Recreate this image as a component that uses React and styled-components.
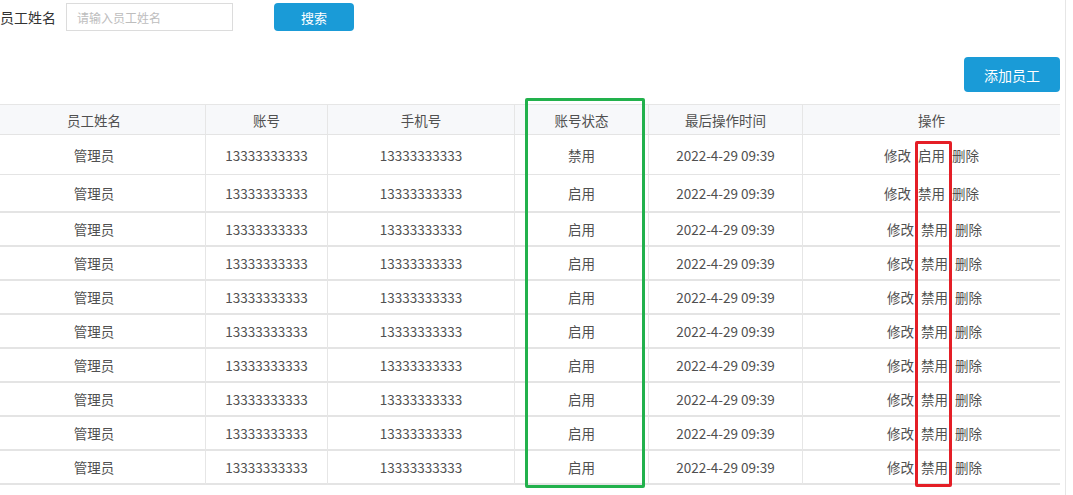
import React from 'react'
import styled, { createGlobalStyle } from 'styled-components'

const GlobalStyle = createGlobalStyle`
  html, body {
    margin: 0;
    padding: 0;
    background: #fff;
  }
  body {
    font-family: "Noto Sans CJK SC", "Microsoft YaHei", sans-serif;
    color: #4d4d4d;
  }
`

const Page = styled.div`
  width: 1066px;
  height: 495px;
  border-right: 1px solid #e6e6e6;
  box-sizing: border-box;
  overflow: hidden;
`

const SearchBar = styled.div`
  display: flex;
  align-items: center;
  height: 28px;
  padding-top: 3px;
`

const Label = styled.span`
  font-size: 14px;
  color: #333;
  margin-right: 10px;
  line-height: 28px;
`

const Input = styled.input`
  width: 167px;
  height: 28px;
  box-sizing: border-box;
  border: 1px solid #dcdcdc;
  padding: 0 10px;
  font-family: inherit;
  font-size: 12px;
  color: #333;
  outline: none;
  &::placeholder {
    color: #bdbdbd;
  }
`

const Button = styled.button`
  width: ${p => p.$w}px;
  height: ${p => p.$h}px;
  margin-left: ${p => p.$ml || 0}px;
  border: none;
  border-radius: 4px;
  background: #1a9bd7;
  color: #fff;
  font-family: inherit;
  font-size: ${p => p.$fs || 13}px;
  cursor: pointer;
  padding: 0;
`

const ActionBar = styled.div`
  display: flex;
  justify-content: flex-end;
  margin-top: 26px;
  padding-right: 5px;
`

const TableWrap = styled.div`
  position: relative;
  margin-top: 12px;
  margin-left: -17px;
  width: 1077px;
`

const Grid = styled.div`
  display: grid;
  grid-template-columns: 222px 122px 187px 134px 154px 258px;
  width: 1077px;
  border-top: 1px solid #e6e6e6;
  border-right: 1px solid #e6e6e6;
  box-sizing: border-box;
`

const Cell = styled.div`
  display: flex;
  align-items: center;
  justify-content: center;
  height: ${p => p.$h}px;
  box-sizing: border-box;
  border-bottom: ${p => (p.$thick ? 2 : 1)}px solid #e4e4e4;
  border-left: ${p => (p.$first ? 'none' : '1px solid #e6e6e6')};
  background: ${p => (p.$head ? '#f7f8fa' : '#fff')};
  font-size: 13.5px;
  color: #505050;
  white-space: nowrap;
`

const Op = styled.span`
  margin: 0 3.5px;
  color: #505050;
  cursor: pointer;
`

const Mark = styled.div`
  position: absolute;
  left: ${p => p.$x}px;
  top: ${p => p.$y}px;
  width: ${p => p.$w}px;
  height: ${p => p.$h}px;
  border: ${p => p.$b}px solid ${p => p.$c};
  border-radius: 2px;
  box-sizing: border-box;
  pointer-events: none;
`

const headers = ['员工姓名', '账号', '手机号', '账号状态', '最后操作时间', '操作']

const rows = Array.from({ length: 10 }, (_, i) => ({
  name: '管理员',
  account: '13333333333',
  phone: '13333333333',
  status: i === 0 ? '禁用' : '启用',
  time: '2022-4-29 09:39',
  toggle: i === 0 ? '启用' : '禁用',
  h: i === 0 ? 40 : i === 1 ? 38 : 34,
  thick: i >= 1,
  shift: i >= 2 ? 6 : 0,
}))

export default function App() {
  return (
    <Page>
      <GlobalStyle />
      <SearchBar>
        <Label>员工姓名</Label>
        <Input placeholder="请输入员工姓名" />
        <Button $w={80} $h={28} $ml={41}>搜索</Button>
      </SearchBar>
      <ActionBar>
        <Button $w={96} $h={35} $fs={14}>添加员工</Button>
      </ActionBar>
      <TableWrap>
        <Grid>
          {headers.map((h, i) => (
            <Cell key={h} $head $h={30} $first={i === 0}>{h}</Cell>
          ))}
          {rows.map((r, i) => (
            <React.Fragment key={i}>
              <Cell $h={r.h} $thick={r.thick} $first>{r.name}</Cell>
              <Cell $h={r.h} $thick={r.thick}>{r.account}</Cell>
              <Cell $h={r.h} $thick={r.thick}>{r.phone}</Cell>
              <Cell $h={r.h} $thick={r.thick}>{r.status}</Cell>
              <Cell $h={r.h} $thick={r.thick}>{r.time}</Cell>
              <Cell $h={r.h} $thick={r.thick} style={{ paddingLeft: r.shift }}>
                <Op>修改</Op>
                <Op>{r.toggle}</Op>
                <Op>删除</Op>
              </Cell>
            </React.Fragment>
          ))}
        </Grid>
        <Mark $x={542} $y={-6} $w={120} $h={390} $b={3} $c="#22b14c" />
        <Mark $x={932} $y={37} $w={37} $h={346} $b={3} $c="#e41e26" />
      </TableWrap>
    </Page>
  )
}
